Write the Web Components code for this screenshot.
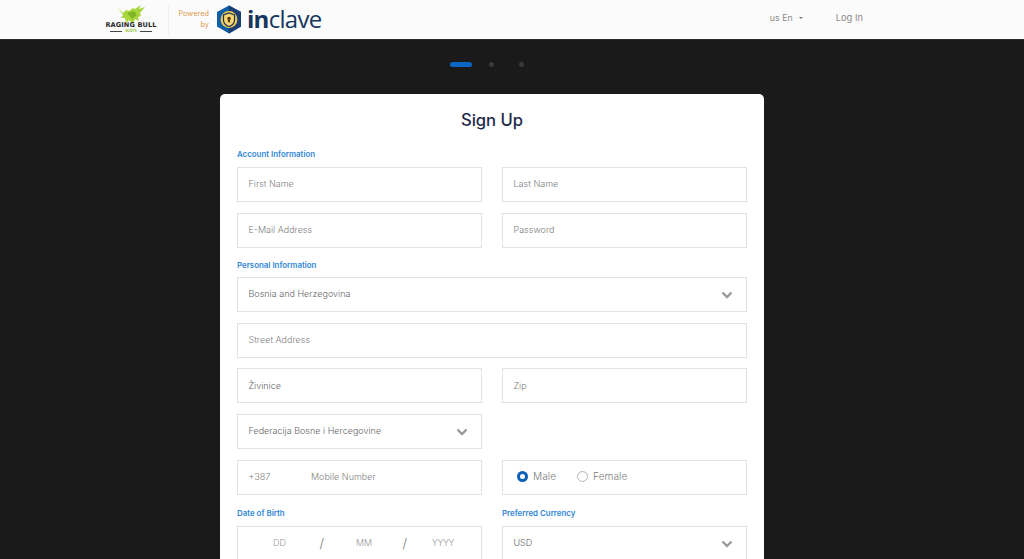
<!DOCTYPE html>
<html lang="en">
<head>
<meta charset="utf-8">
<title>Sign Up</title>
<style>
  html, body { margin: 0; height: 559px; overflow: hidden; background: #1a1a1a; }
  body { font-family: "Inter", "Open Sans", sans-serif; }
</style>
</head>
<body>
<app-header></app-header>
<step-dots></step-dots>
<signup-card title="Sign Up">
  <section-label class="first">Account Information</section-label>
  <form-row>
    <text-field>First Name</text-field>
    <text-field>Last Name</text-field>
  </form-row>
  <form-row>
    <text-field>E-Mail Address</text-field>
    <text-field>Password</text-field>
  </form-row>
  <section-label class="personal">Personal Information</section-label>
  <form-row full>
    <text-field select value>Bosnia and Herzegovina</text-field>
  </form-row>
  <form-row full>
    <text-field>Street Address</text-field>
  </form-row>
  <form-row>
    <text-field value>Živinice</text-field>
    <text-field>Zip</text-field>
  </form-row>
  <form-row>
    <text-field select value>Federacija Bosne i Hercegovine</text-field>
    <div></div>
  </form-row>
  <form-row>
    <phone-field></phone-field>
    <gender-field></gender-field>
  </form-row>
  <form-row labels>
    <section-label>Date of Birth</section-label>
    <section-label>Preferred Currency</section-label>
  </form-row>
  <form-row>
    <dob-field></dob-field>
    <text-field select value>USD</text-field>
  </form-row>
</signup-card>

<script>
const fontStack = '"Inter", "Open Sans", sans-serif';

class AppHeader extends HTMLElement {
  connectedCallback() {
    this.attachShadow({ mode: 'open' });
    this.shadowRoot.innerHTML = `<style>
      :host { display: flex; align-items: center; height: 39px; background: #fbfbfb; border-bottom: 1px solid #2a2a2a; font-family: ${fontStack}; }
      .bull { width: 54px; margin-left: 104px; display: flex; flex-direction: column; align-items: center; height: 29px; }
      .bull svg { display: block; margin-bottom: -3px; }
      .bull b { font: 700 6.6px/7px "DejaVu Sans", sans-serif; color: #2a2a2a; white-space: nowrap; letter-spacing: .1px; }
      .bull small { font: 700 3.5px/4px "Inter", sans-serif; color: #8fc02a; display: flex; align-items: center; gap: 3px; }
      .bull small i { width: 12px; height: 1px; background: #444; }
      .sep { width: 1px; height: 29px; background: #eee; margin-left: 10px; }
      .powered { width: 40px; text-align: right; font-size: 7.2px; line-height: 10.5px; color: #e0994f; letter-spacing: .1px; }
      .shield { margin-left: 7px; display: block; }
      .brand { margin-left: 5px; font: 400 24px/1 "Open Sans", sans-serif; color: #16365f; letter-spacing: -.7px; position: relative; top: -1px; }
      .brand b { font-weight: 700; }
      nav { margin-left: auto; display: flex; align-items: center; margin-right: 161px; margin-bottom: 4px; font-size: 9.4px; color: #8b8b8b; }
      .lang { display: flex; align-items: center; font-size: 8.8px; }
      .caret { width: 0; height: 0; border: 2.7px solid transparent; border-top-color: #777; border-bottom: 0; margin-left: 6px; }
      .login { margin-left: 33px; }
    </style>
    <div class="bull">
      <svg width="34" height="20" viewBox="0 0 34 20"><path d="M4 3 9 8 12 5 15 6 19 3 21 4 27 0 25 4 31 2 26 8 27 11 24 12 25 16 21 14 19 19 15 15 12 18 11 13 7 13 9 10Z" fill="#a8d63c"/><path d="M13 8 20 6 23 10 18 14Z" fill="#7fb526"/></svg>
      <b>RAGING BULL</b>
      <small><i></i>SLOTS<i></i></small>
    </div>
    <div class="sep"></div>
    <div class="powered">Powered<br>by</div>
    <svg class="shield" width="26" height="29" viewBox="0 0 26 28">
      <path d="M13 0 25 6.5V21L13 28 1 21V6.5Z" fill="#0f5ea8"/>
      <path d="M13 0 25 6.5V21L13 28Z" fill="#1b3f74"/>
      <circle cx="13" cy="14" r="8.4" fill="#f3c84b"/>
      <path d="M13 7.5 18.5 9.5V14.5C18.5 17.5 16 20 13 21 10 20 7.5 17.5 7.5 14.5V9.5Z" fill="#f7d873" stroke="#17345f" stroke-width="1.2"/>
      <circle cx="13" cy="13" r="1.8" fill="#5a3b10"/><path d="M12.2 13.5h1.6l.5 3.2h-2.6z" fill="#5a3b10"/>
    </svg>
    <span class="brand"><b>in</b>clave</span>
    <nav><span class="lang">us En<i class="caret"></i></span><span class="login">Log In</span></nav>`;
  }
}

class StepDots extends HTMLElement {
  connectedCallback() {
    this.attachShadow({ mode: 'open' });
    this.shadowRoot.innerHTML = `<style>
      :host { display: flex; justify-content: center; align-items: center; width: 984px; height: 50px; }
      .wrap { display: flex; align-items: center; margin-top: -2px; margin-right: 11px; }
      .on { width: 22px; height: 5px; border-radius: 3px; background: #0a66c2; }
      .off { width: 5px; height: 5px; border-radius: 50%; background: #3a3a3a; margin-left: 17px; }
      .off + .off { margin-left: 25px; }
    </style><div class="wrap"><div class="on"></div><div class="off"></div><div class="off"></div></div>`;
  }
}

class SignupCard extends HTMLElement {
  connectedCallback() {
    this.attachShadow({ mode: 'open' });
    this.shadowRoot.innerHTML = `<style>
      :host { display: block; width: 510px; margin: 4px 0 0 220px; padding: 0 17px 20px; background: #fff; border-radius: 5px; font-family: ${fontStack}; }
      h1 { margin: 0; padding-top: 14px; height: 40px; font-size: 16.6px; line-height: 24px; font-weight: 500; color: #1e2a4a; text-align: center; }
    </style><h1>${this.getAttribute('title')}</h1><slot></slot>`;
  }
}

class SectionLabel extends HTMLElement {
  connectedCallback() {
    this.attachShadow({ mode: 'open' });
    this.shadowRoot.innerHTML = `<style>
      :host { display: block; height: 12px; margin-bottom: 6.5px; font-size: 7.9px; line-height: 12px; font-weight: 600; color: #2f86d6; white-space: nowrap; }
      :host(.first) { margin-bottom: 7px; }
      :host(.personal) { padding-top: 1px; margin-bottom: 5.5px; }
    </style><slot></slot>`;
  }
}

class FormRow extends HTMLElement {
  connectedCallback() {
    this.attachShadow({ mode: 'open' });
    this.shadowRoot.innerHTML = `<style>
      :host { display: grid; grid-template-columns: 1fr 1fr; column-gap: 20px; margin-bottom: 10.7px; }
      :host([full]) { grid-template-columns: 1fr; }
      :host([labels]) { margin-top: 12.5px; margin-bottom: 0; }
    </style><slot></slot>`;
  }
}

const boxStyle = `:host { display: flex; align-items: center; box-sizing: border-box; height: 35px; border: 1px solid #e2e2e2; background: #fff; font-size: 9px; font-weight: 300; color: #808080; padding: 0 10.5px 1.5px; white-space: nowrap; min-width: 0; }`;

const chevron = `<svg width="12" height="8" viewBox="0 0 12 8"><path d="M1.5 1.5 6 6l4.5-4.5" fill="none" stroke="#9a9a9a" stroke-width="2.4"/></svg>`;

class TextField extends HTMLElement {
  connectedCallback() {
    const select = this.hasAttribute('select');
    this.attachShadow({ mode: 'open' });
    this.shadowRoot.innerHTML = `<style>${boxStyle}
      :host([value]) { color: #666; }
      svg { margin-left: auto; margin-right: 2.5px; margin-top: 3px; }
    </style><slot></slot>${select ? chevron : ''}`;
  }
}

class PhoneField extends HTMLElement {
  connectedCallback() {
    this.attachShadow({ mode: 'open' });
    this.shadowRoot.innerHTML = `<style>${boxStyle}
      .code { width: 62.5px; }
    </style><span class="code">+387</span><span>Mobile Number</span>`;
  }
}

class GenderField extends HTMLElement {
  connectedCallback() {
    this.attachShadow({ mode: 'open' });
    this.shadowRoot.innerHTML = `<style>${boxStyle}
      :host { padding-left: 14px; font-size: 10.2px; }
      i { width: 11px; height: 11px; border-radius: 50%; box-sizing: border-box; margin-right: 5px; }
      .on { border: 3.2px solid #0a62b8; background: #fff; }
      .off { border: 1px solid #b5b5b5; margin-left: 21px; }
    </style><i class="on"></i><span>Male</span><i class="off"></i><span>Female</span>`;
  }
}

class DobField extends HTMLElement {
  connectedCallback() {
    this.attachShadow({ mode: 'open' });
    this.shadowRoot.innerHTML = `<style>${boxStyle}
      :host { padding: 0 0 1.5px; color: #999; display: grid; grid-template-columns: 83px 83px 83px; justify-content: start; text-align: center; }
      span { position: relative; }
      .s { position: absolute; right: -3px; top: -2px; font-size: 13px; font-weight: 300; color: #777; }
      .m { padding-left: 3px; }
      .y { padding-right: 5px; letter-spacing: -.4px; }
    </style><span>DD<b class="s">/</b></span><span class="m">MM<b class="s">/</b></span><span class="y">YYYY</span>`;
  }
}

customElements.define('app-header', AppHeader);
customElements.define('step-dots', StepDots);
customElements.define('signup-card', SignupCard);
customElements.define('section-label', SectionLabel);
customElements.define('form-row', FormRow);
customElements.define('text-field', TextField);
customElements.define('phone-field', PhoneField);
customElements.define('gender-field', GenderField);
customElements.define('dob-field', DobField);
</script>
</body>
</html>
